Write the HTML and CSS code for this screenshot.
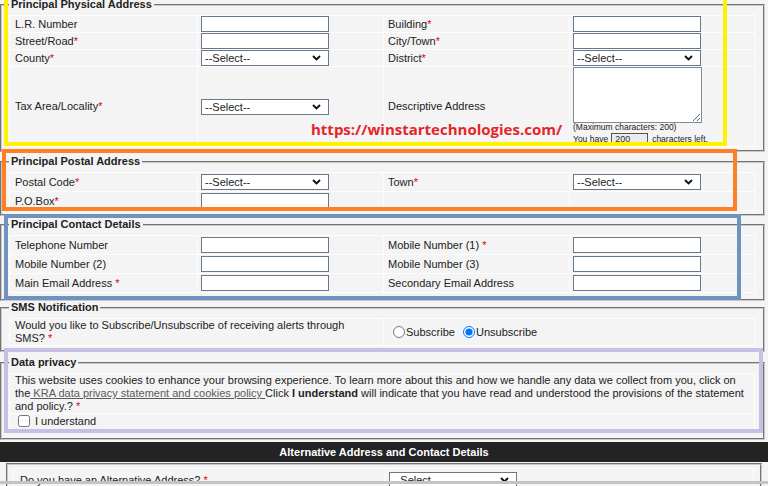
FILE: index.html
```html
<!DOCTYPE html>
<html lang="en">
<head>
<meta charset="utf-8">
<title>Registration</title>
<link rel="stylesheet" href="styles.css">
</head>
<body>
<div class="page">

  <fieldset class="fs fs-phys">
    <legend>Principal Physical Address</legend>
    <table class="grid g17">
      <colgroup><col class="c1"><col class="c2"><col class="c3"><col class="c4"></colgroup>
      <tr>
        <td class="lbl">L.R. Number</td>
        <td><input class="inp" type="text"></td>
        <td class="lbl r">Building<span class="req">*</span></td>
        <td><input class="inp" type="text"></td>
      </tr>
      <tr>
        <td class="lbl">Street/Road<span class="req">*</span></td>
        <td><input class="inp" type="text"></td>
        <td class="lbl r">City/Town<span class="req">*</span></td>
        <td><input class="inp" type="text"></td>
      </tr>
      <tr>
        <td class="lbl">County<span class="req">*</span></td>
        <td><div class="sel"><span>--Select--</span><svg viewBox="0 0 9 6"><path d="M1 1 L4.5 4.5 L8 1" fill="none" stroke="#111" stroke-width="1.9"/></svg></div></td>
        <td class="lbl r">District<span class="req">*</span></td>
        <td><div class="sel"><span>--Select--</span><svg viewBox="0 0 9 6"><path d="M1 1 L4.5 4.5 L8 1" fill="none" stroke="#111" stroke-width="1.9"/></svg></div></td>
      </tr>
      <tr>
        <td class="lbl">Tax Area/Locality<span class="req">*</span></td>
        <td><div class="sel"><span>--Select--</span><svg viewBox="0 0 9 6"><path d="M1 1 L4.5 4.5 L8 1" fill="none" stroke="#111" stroke-width="1.9"/></svg></div></td>
        <td class="lbl r">Descriptive Address</td>
        <td class="top">
          <textarea class="area"></textarea>
          <div class="hint">(Maximum characters: 200)</div>
          <div class="hint count">You have <input class="cnt" type="text" value="200" readonly> characters left.</div>
        </td>
      </tr>
    </table>
  </fieldset>

  <fieldset class="fs fs-postal">
    <legend>Principal Postal Address</legend>
    <table class="grid g19">
      <colgroup><col class="c1"><col class="c2"><col class="c3"><col class="c4"></colgroup>
      <tr>
        <td class="lbl">Postal Code<span class="req">*</span></td>
        <td><div class="sel"><span>--Select--</span><svg viewBox="0 0 9 6"><path d="M1 1 L4.5 4.5 L8 1" fill="none" stroke="#111" stroke-width="1.9"/></svg></div></td>
        <td class="lbl r">Town<span class="req">*</span></td>
        <td><div class="sel"><span>--Select--</span><svg viewBox="0 0 9 6"><path d="M1 1 L4.5 4.5 L8 1" fill="none" stroke="#111" stroke-width="1.9"/></svg></div></td>
      </tr>
      <tr>
        <td class="lbl">P.O.Box<span class="req">*</span></td>
        <td><input class="inp" type="text"></td>
        <td class="lbl r"></td>
        <td></td>
      </tr>
    </table>
  </fieldset>

  <fieldset class="fs fs-contact">
    <legend>Principal Contact Details</legend>
    <table class="grid g19">
      <colgroup><col class="c1"><col class="c2"><col class="c3"><col class="c4"></colgroup>
      <tr>
        <td class="lbl">Telephone Number</td>
        <td><input class="inp" type="text"></td>
        <td class="lbl r">Mobile Number (1) <span class="req">*</span></td>
        <td><input class="inp" type="text"></td>
      </tr>
      <tr>
        <td class="lbl">Mobile Number (2)</td>
        <td><input class="inp" type="text"></td>
        <td class="lbl r">Mobile Number (3)</td>
        <td><input class="inp" type="text"></td>
      </tr>
      <tr>
        <td class="lbl">Main Email Address <span class="req">*</span></td>
        <td><input class="inp" type="text"></td>
        <td class="lbl r">Secondary Email Address</td>
        <td><input class="inp" type="text"></td>
      </tr>
    </table>
  </fieldset>

  <fieldset class="fs fs-sms">
    <legend>SMS Notification</legend>
    <table class="grid">
      <colgroup><col class="h1"><col class="h2"></colgroup>
      <tr>
        <td class="lbl two">Would you like to Subscribe/Unsubscribe of receiving alerts through<br>SMS? <span class="req">*</span></td>
        <td class="radios">
          <label class="opt"><input type="radio" name="sms"><span>Subscribe</span></label>
          <label class="opt opt2"><input type="radio" name="sms" checked><span>Unsubscribe</span></label>
        </td>
      </tr>
    </table>
  </fieldset>

  <fieldset class="fs fs-privacy">
    <legend>Data privacy</legend>
    <table class="grid">
      <tr>
        <td class="lbl para">This website uses cookies to enhance your browsing experience. To learn more about this and how we handle any data we collect from you, click on<br>the<a class="policy" href="#">&nbsp;KRA data privacy statement and cookies policy&nbsp;</a>Click <b>I understand</b> will indicate that you have read and understood the provisions of the statement<br>and policy.? <span class="req">*</span></td>
      </tr>
      <tr>
        <td class="lbl chk"><label class="agree"><input type="checkbox"><span>I understand</span></label></td>
      </tr>
    </table>
  </fieldset>

  <div class="bar">Alternative Address and Contact Details</div>

  <div class="alt">
    <table class="grid alt-grid">
      <colgroup><col class="a1"><col class="a2"></colgroup>
      <tr>
        <td class="lbl">Do you have an Alternative Address? <span class="req">*</span></td>
        <td><div class="sel"><span>--Select--</span><svg viewBox="0 0 9 6"><path d="M1 1 L4.5 4.5 L8 1" fill="none" stroke="#111" stroke-width="1.9"/></svg></div></td>
      </tr>
    </table>
  </div>

  <div class="mark mark-yellow"></div>
  <div class="mark mark-orange"></div>
  <div class="mark mark-blue"></div>
  <div class="mark mark-purple"></div>
  <div class="watermark">https://winstartechnologies.com/</div>
  <div class="edge"></div>
</div>
</body>
</html>
```

FILE: styles.css
```css
* { box-sizing: border-box; }

html, body {
  margin: 0;
  padding: 0;
  height: 486px;
  overflow: hidden;
  background: #f4f4f4;
}

body {
  font-family: "Liberation Sans", Arial, sans-serif;
  font-size: 11px;
  color: #222;
}

.page {
  position: relative;
  width: 768px;
  height: 486px;
}

/* fieldsets */
.fs {
  margin: 0 3px 0 0;
  padding: 4px 7px 3px 7px;
  border: 2px groove #c8c8c8;
  min-width: 0;
}
.fs legend {
  font-weight: bold;
  line-height: 13px;
  padding: 0 2px;
  color: #222;
}
.fs-phys { margin-top: -2px; padding-bottom: 3px; }
.fs-postal { margin-top: 3px; padding-bottom: 3px; }
.fs-contact { margin-top: 2px; padding-bottom: 6px; }
.fs-sms { padding-bottom: 4px; }
.fs-privacy { margin-top: 4px; padding-bottom: 6px; }

/* tables */
.grid {
  width: 746px;
  border-collapse: collapse;
  table-layout: fixed;
}
.grid td {
  border: 1px solid #fdfdfd;
  padding: 0 3px;
  vertical-align: middle;
  line-height: 13px;
}
.g19 td { padding-top: 1px; padding-bottom: 1px; }
.grid td.lbl { padding-left: 5px; }
.grid td.lbl.r { padding-left: 4px; }
.grid td.top { vertical-align: top; }

.c1 { width: 188px; }
.c2, .c3, .c4 { width: 186px; }
.h1 { width: 374px; }
.h2 { width: 372px; }

.req { color: #e50000; }

/* controls */
.inp {
  display: block;
  width: 128px;
  height: 16px;
  margin: 0;
  padding: 0 3px;
  border: 1px solid #66788a;
  background: #fff;
  font: inherit;
}
.sel {
  display: flex;
  align-items: center;
  justify-content: space-between;
  width: 128px;
  height: 16px;
  padding: 0 7px 0 3px;
  border: 1px solid #66788a;
  background: #fff;
  color: #222;
  line-height: 14px;
}
.sel svg { width: 9px; height: 6px; display: block; }

.area {
  display: block;
  width: 129px;
  height: 56px;
  margin: 0;
  border: 1px solid #7b8d9c;
  background: #fff;
  resize: both;
}
.hint {
  font-size: 8.5px;
  line-height: 9px;
  color: #222;
  white-space: nowrap;
}
.hint.count {
  display: flex;
  align-items: center;
  height: 14px;
}
.cnt {
  width: 37px;
  height: 12px;
  margin: 0 4px 0 3px;
  padding: 0 3px;
  border: 1px solid #555;
  background: #ebebeb;
  font: inherit;
  font-size: 9px;
  color: #333;
}

/* sms */
.two { white-space: nowrap; }
.grid td.radios { padding-left: 9px; padding-top: 3px; }
.opt {
  display: inline-flex;
  align-items: center;
}
.opt input {
  width: 12px;
  height: 12px;
  margin: 0 1px 0 0;
}
.opt2 { margin-left: 5px; }

/* privacy */
.para { white-space: nowrap; }
.policy {
  color: #5a5a5a;
  text-decoration: underline;
}
.chk { height: 18px; }
.agree {
  display: inline-flex;
  align-items: center;
}
.agree input {
  width: 12px;
  height: 12px;
  margin: 0 5px 0 3px;
}

/* black section header */
.bar {
  margin-top: 2px;
  height: 20px;
  background: #232323;
  color: #fff;
  font-weight: bold;
  text-align: center;
  line-height: 20px;
}

/* alternative address block */
.alt {
  margin: 1px 6px 0 6px;
  border: 2px groove #c8c8c8;
  padding: 3px 5px;
}
.alt-grid { width: 740px; }
.alt-grid td { padding-top: 3px; padding-bottom: 3px; vertical-align: top; }
.alt-grid td.lbl { padding-left: 6px; vertical-align: middle; }
.a1 { width: 372px; }
.a2 { width: 368px; }

/* annotation overlays */
.mark {
  position: absolute;
  border: 4px solid;
  z-index: 2;
}
.mark-yellow { left: 4px; top: -10px; width: 723px; height: 158px; border-color: #fff200; }
.mark-orange { left: 2px; top: 151px; width: 735px; height: 62px; border-color: #ff7f27; }
.mark-blue { left: 4px; top: 216px; width: 737px; height: 86px; border-color: #7092be; }
.mark-purple { left: 4px; top: 350px; width: 759px; height: 85px; border-color: #c8bfe7; }

.watermark {
  position: absolute;
  left: 311px;
  top: 120px;
  z-index: 3;
  font-family: "Open Sans", sans-serif;
  font-weight: bold;
  font-size: 15px;
  line-height: 22px;
  color: #e3262b;
  white-space: nowrap;
}

.edge {
  position: absolute;
  left: 0;
  right: 0;
  top: 483px;
  height: 3px;
  background: #c4c4c4;
  z-index: 2;
}
```
